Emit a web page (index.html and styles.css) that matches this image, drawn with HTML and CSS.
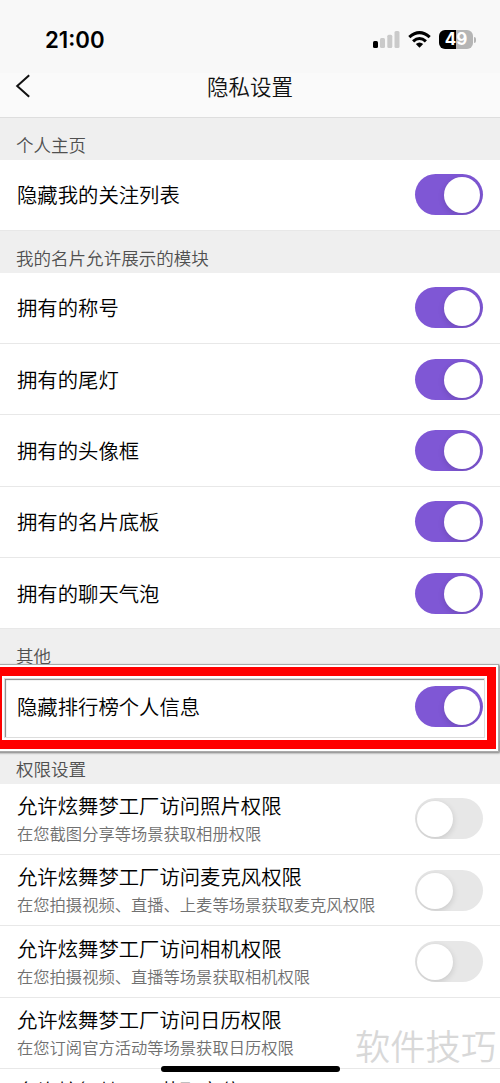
FILE: index.html
```
<!DOCTYPE html>
<html lang="zh-CN">
<head>
<meta charset="utf-8">
<title>隐私设置</title>
<link rel="stylesheet" href="styles.css">
</head>
<body>
<div class="phone">
  <header class="top">
    <div class="status">
      <span class="time">21:00</span>
      <div class="indicators">
        <svg class="signal" width="27" height="17" viewBox="0 0 27 17"><rect x="0" y="10" width="5" height="7" rx="1.5"/><g fill="#cacaca"><rect x="7" y="7" width="5" height="10" rx="1.5"/><rect x="14.3" y="3.7" width="5" height="13.3" rx="1.5"/><rect x="21.5" y="0" width="5" height="17" rx="1.5"/></g></svg>
        <svg class="wifi" width="23" height="17" viewBox="0 0 23 17"><g fill="none" stroke="#000" stroke-width="3.1"><path d="M1.3 6.1Q11.5 -2.8 21.7 6.1"/><path d="M5.1 10.4Q11.5 4.6 17.9 10.4"/></g><path d="M7.8 13Q11.5 9.8 15.2 13L11.5 16.7Z"/></svg>
        <div class="battery"><span>49</span></div><i class="tip"></i>
      </div>
    </div>
    <div class="nav">
      <svg class="back" width="16" height="24" viewBox="0 0 16 24"><path d="M14.2 1.2L2.2 12L14.2 22.8" fill="none" stroke="#111" stroke-width="2"/></svg>
      <h1>隐私设置</h1>
    </div>
  </header>
  <main>
    <h2>个人主页</h2>
    <section><div class="row"><p class="title">隐藏我的关注列表</p><i class="switch on"></i></div></section>
    <h2>我的名片允许展示的模块</h2>
    <section>
      <div class="row"><p class="title">拥有的称号</p><i class="switch on"></i></div>
      <div class="row"><p class="title">拥有的尾灯</p><i class="switch on"></i></div>
      <div class="row"><p class="title">拥有的头像框</p><i class="switch on"></i></div>
      <div class="row"><p class="title">拥有的名片底板</p><i class="switch on"></i></div>
      <div class="row"><p class="title">拥有的聊天气泡</p><i class="switch on"></i></div>
    </section>
    <h2>其他</h2>
    <section><div class="row"><p class="title">隐藏排行榜个人信息</p><i class="switch on"></i></div></section>
    <h2 class="permissions">权限设置</h2>
    <section>
      <div class="row"><div class="copy"><p class="title">允许炫舞梦工厂访问照片权限</p><p class="desc">在您截图分享等场景获取相册权限</p></div><i class="switch"></i></div>
      <div class="row"><div class="copy"><p class="title">允许炫舞梦工厂访问麦克风权限</p><p class="desc">在您拍摄视频、直播、上麦等场景获取麦克风权限</p></div><i class="switch"></i></div>
      <div class="row"><div class="copy"><p class="title">允许炫舞梦工厂访问相机权限</p><p class="desc">在您拍摄视频、直播等场景获取相机权限</p></div><i class="switch"></i></div>
      <div class="row"><div class="copy"><p class="title">允许炫舞梦工厂访问日历权限</p><p class="desc">在您订阅官方活动等场景获取日历权限</p></div></div>
      <div class="row"><div class="copy"><p class="title">允许炫舞梦工厂获取定位</p><p class="desc">&nbsp;</p></div></div>
    </section>
  </main>
  <div class="marker"></div>
  <div class="watermark">软件技巧</div>
  <div class="home"></div>
</div>
</body>
</html>
```
FILE: styles.css
```
* { box-sizing: border-box; margin: 0; padding: 0; }
body { background: #fff; font-family: "Noto Sans CJK SC", sans-serif; color: #111; }
.phone { position: relative; width: 500px; height: 1083px; overflow: hidden; }
.top { height: 118px; background: #fafafa; border-bottom: 1px solid #dedede; }
.status { display: flex; justify-content: space-between; height: 73px; padding: 25px 24px 0 45px; background: #f8f8f8; }
.time { font: 600 22.2px/29px Inter, sans-serif; color: #000; }
.indicators { display: flex; align-items: center; height: 29px; }
.wifi { margin-left: 8px; }
.battery { display: flex; justify-content: center; width: 34px; height: 19px; margin-left: 8px; border-radius: 6px; background: linear-gradient(90deg, #000 50%, #b5b5b5 50%); color: #fff; font: 700 17px/19px Inter, sans-serif; }
.tip { width: 2px; height: 6px; margin-left: 1px; border-radius: 0 2px 2px 0; background: #b5b5b5; }
.nav { display: grid; grid-template-columns: 42px 1fr 42px; grid-template-rows: 26px; align-items: center; height: 26px; }
.back { margin-left: 15px; }
h1 { font-size: 21.5px; line-height: 30px; font-weight: 350; text-align: center; }
h2 { height: 41.7px; padding: 12px 16px 0; background: #efefef; color: #505050; font-size: 17.55px; line-height: 30px; font-weight: 350; }
.permissions { height: 41.2px; }
.row { display: flex; align-items: center; justify-content: space-between; height: 71.35px; padding: 0 17px; background: #fff; border-bottom: 1px solid #e8e8e8; }
.title { padding-bottom: 1px; font-size: 20.35px; line-height: 30px; font-weight: 350; color: #000; }
.copy { padding-bottom: 3px; }
.copy .title { padding-bottom: 0; }
.desc { margin-top: 1px; font-size: 16.3px; line-height: 24px; color: #707070; font-weight: 350; }
.switch { position: relative; width: 68px; height: 41px; border-radius: 21px; background: #e7e7e7; overflow: hidden; }
.switch::after { content: ""; position: absolute; left: 2px; top: 3px; width: 36px; height: 36px; border-radius: 50%; background: #fff; box-shadow: 0 2px 6px rgba(0, 0, 0, .14); }
.switch.on { background: #7f57d5; }
.switch.on::after { left: 29px; }
.marker { position: absolute; left: -7px; top: 667px; width: 503px; height: 82px; border: 9px solid #f00; outline: 2px solid #fff; box-shadow: 0 0 0 3px #aaa, 1px 1px 2px 3px #777, inset 0 0 0 2px #fff, inset 0 0 0 3px #ddd, inset 4px 4px 1px 0 #888; }
.watermark { position: absolute; left: 355px; top: 1019px; font-size: 35.3px; line-height: 52px; color: #d8d8d8; font-weight: 350; }
.home { position: absolute; left: 161px; top: 1066px; width: 179px; height: 6px; border-radius: 3px; background: #000; }
```
